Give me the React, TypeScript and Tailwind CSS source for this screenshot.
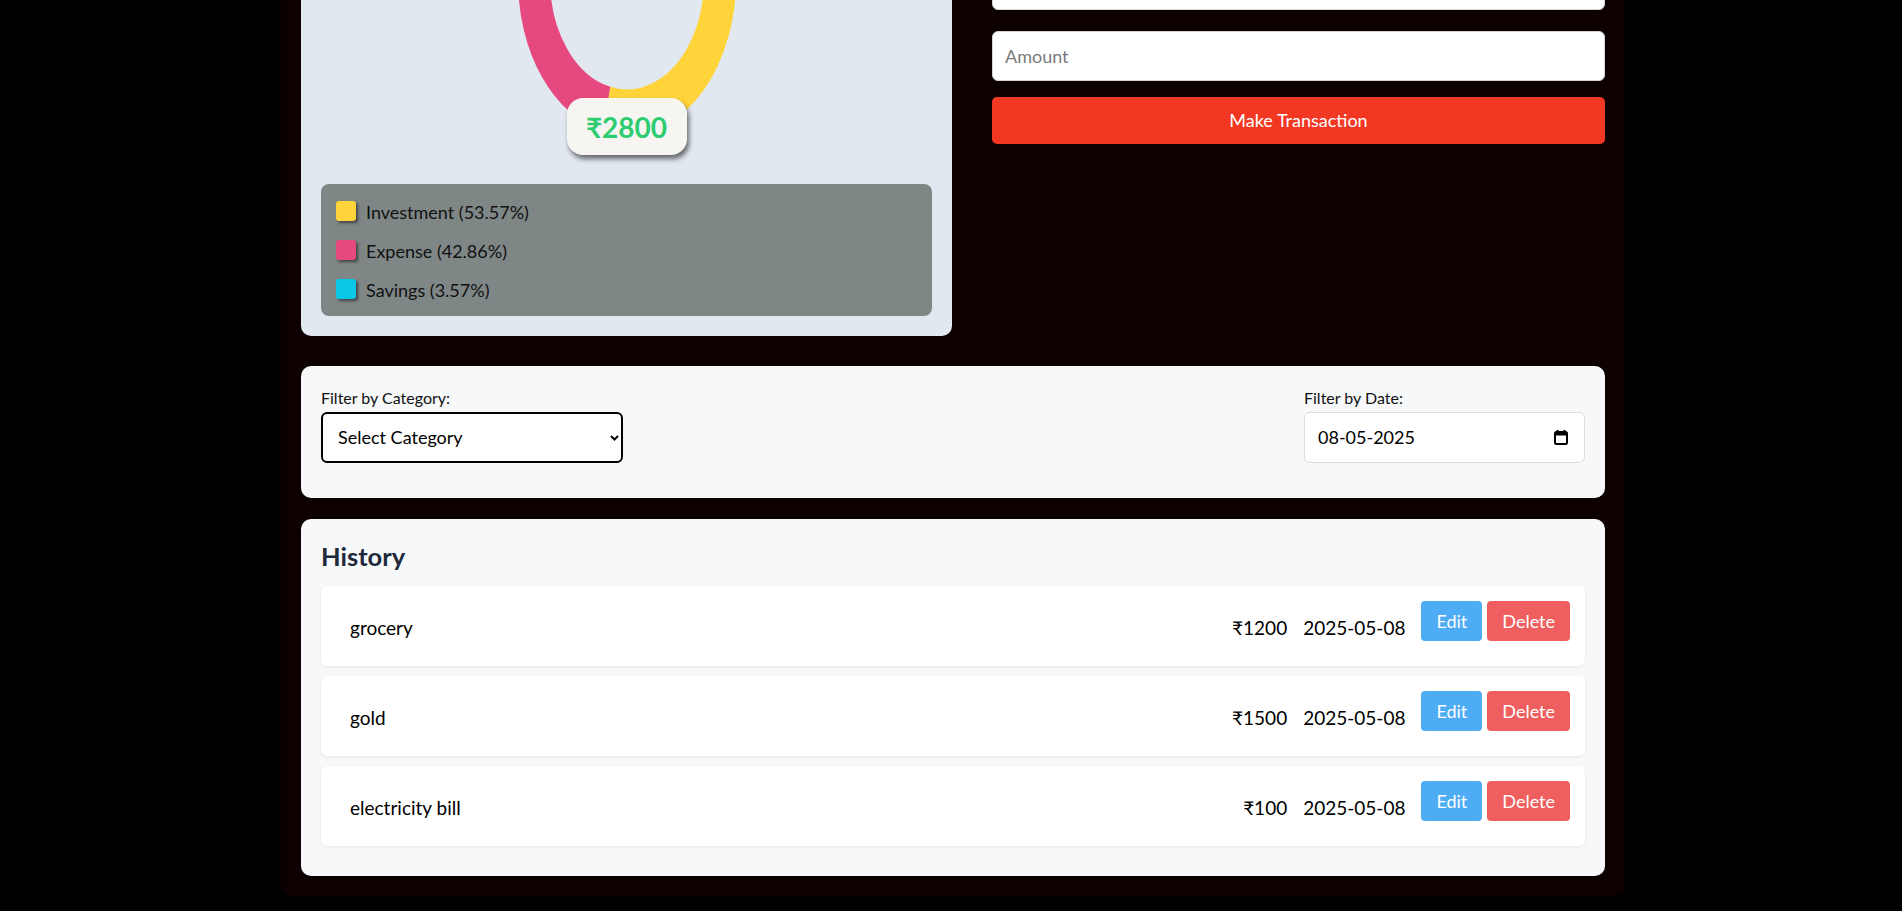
import React from "react";

const legend = [
  { label: "Investment", pct: "53.57", color: "bg-[#ffd43b]" },
  { label: "Expense", pct: "42.86", color: "bg-[#e64980]" },
  { label: "Savings", pct: "3.57", color: "bg-[#0bc8e8]" },
];

const segments = [
  { value: 53.57, color: "#ffd43b" },
  { value: 42.86, color: "#e64980" },
  { value: 3.57, color: "#0bc8e8" },
];

const history = [
  { name: "grocery", amount: 1200, date: "2025-05-08" },
  { name: "gold", amount: 1500, date: "2025-05-08" },
  { name: "electricity bill", amount: 100, date: "2025-05-08" },
];

// stretched doughnut, like a canvas chart squeezed by its box
function Donut() {
  let acc = 0;
  return (
    <svg
      viewBox="-100 -100 200 200"
      preserveAspectRatio="none"
      className="mx-auto block h-[310px] w-[218px]"
    >
      <g transform="rotate(-90)">
        {segments.map((s) => {
          const el = (
            <circle
              key={s.color}
              r="85.3"
              fill="none"
              stroke={s.color}
              strokeWidth="29.4"
              pathLength={100}
              strokeDasharray={`${s.value} ${100 - s.value}`}
              strokeDashoffset={-acc}
            />
          );
          acc += s.value;
          return el;
        })}
      </g>
    </svg>
  );
}

function ChartCard() {
  return (
    <section className="w-[651px] shrink-0 rounded-[10px] bg-[#e2e8f0] p-5">
      <div className="relative h-[330px]">
        <Donut />
        <div className="absolute bottom-0 left-1/2 flex h-[57px] w-[120px] -translate-x-1/2 items-center justify-center rounded-[16px] bg-[#f6f5f2] text-[28px] font-bold text-[#2ecc71] shadow-[2px_4px_5px_rgba(0,0,0,0.55)]">
          ₹2800
        </div>
      </div>
      {/* legend */}
      <div className="mt-[29px] flex flex-col gap-[19px] rounded-[8px] bg-[#7f8686] px-[15px] py-[17px]">
        {legend.map((l) => (
          <div key={l.label} className="flex h-5 items-center gap-[10px]">
            <span
              className={`h-5 w-5 rounded-[3px] shadow-[2px_2px_3px_rgba(0,0,0,0.5)] ${l.color}`}
            ></span>
            <span className="mt-[2px] text-[18px] leading-5 text-[#111]">
              {l.label} ({l.pct}%)
            </span>
          </div>
        ))}
      </div>
    </section>
  );
}

function TransactionForm() {
  const input =
    "mb-[21px] block h-[50px] w-full rounded-[6px] border border-[#d4d4d4] bg-white px-3 text-[18px] text-black outline-none placeholder:text-[#7a7a7a]";
  return (
    <section className="flex-1 pt-[13px]">
      <input className={input} placeholder="Description" />
      <input className={input} placeholder="Category" />
      <input className={input} placeholder="Date" />
      <input className={input} placeholder="Amount" />
      <button className="-mt-[5px] h-[47px] w-full rounded-[5px] bg-[#f23823] text-[18px] text-white">
        Make Transaction
      </button>
    </section>
  );
}

function CalendarIcon() {
  return (
    <svg width="14" height="15" viewBox="0 0 14 15">
      <path d="M3.5 0v3M10.5 0v3" stroke="#000" strokeWidth="2" />
      <rect
        x="1"
        y="2"
        width="12"
        height="12"
        rx="1.5"
        fill="none"
        stroke="#000"
        strokeWidth="2"
      />
      <rect x="1" y="2" width="12" height="3.5" fill="#000" />
    </svg>
  );
}

function Filters() {
  return (
    <section className="mt-[30px] flex justify-between rounded-[10px] bg-[#f7f8fa] px-5 pb-[35px] pt-[22px]">
      <div>
        <label className="mb-1 block text-[16px] leading-5 text-[#111]">
          Filter by Category:
        </label>
        <div className="flex h-[51px] w-[302px] items-center justify-between rounded-[6px] border-2 border-black bg-white pl-[15px] pr-[2px]">
          <span className="text-[18px] text-black">Select Category</span>
          <svg width="9" height="6" viewBox="0 0 9 6">
            <path d="M1 1l3.5 3.5L8 1" fill="none" stroke="#000" strokeWidth="2" />
          </svg>
        </div>
      </div>
      <div className="w-[281px]">
        <label className="mb-1 block text-[16px] leading-5 text-[#111]">
          Filter by Date:
        </label>
        <div className="flex h-[51px] items-center justify-between rounded-[6px] border border-[#dcdcdc] bg-white pl-[13px] pr-[16px]">
          <span className="text-[18px] text-black">08-05-2025</span>
          <CalendarIcon />
        </div>
      </div>
    </section>
  );
}

function History() {
  return (
    <section className="mt-[21px] rounded-[10px] bg-[#f7f8fa] p-5">
      <h2 className="mb-[14px] pt-[1px] text-[25.5px] font-bold leading-8 text-[#1e293b]">
        History
      </h2>
      {history.map((h) => (
        <div
          key={h.name}
          className="mb-[10px] flex h-[80px] items-center justify-between rounded-[6px] bg-white pl-[29px] pr-[15px] shadow-[0_1px_3px_rgba(0,0,0,0.08)]"
        >
          <span className="mt-1 text-[19px] text-black">{h.name}</span>
          <div className="flex items-center gap-4">
            <span className="mt-1 text-[19px] text-black">₹{h.amount}</span>
            <span className="mt-1 text-[19px] text-black">{h.date}</span>
            <div className="mb-[10px] flex gap-[5px]">
              <button className="h-10 rounded-[4px] bg-[#4eacf5] px-[15px] text-[18px] text-white">
                Edit
              </button>
              <button className="h-10 rounded-[4px] bg-[#f05f5f] px-[15px] text-[18px] text-white">
                Delete
              </button>
            </div>
          </div>
        </div>
      ))}
    </section>
  );
}

export default function App() {
  return (
    <div className="min-h-screen overflow-hidden bg-black font-['Lato','Noto_Sans',sans-serif]">
      <div className="-mt-[215px] ml-[281px] w-[1344px] rounded-b-[10px] bg-[#0d0000] p-5">
        <div className="flex items-start gap-10">
          <ChartCard />
          <TransactionForm />
        </div>
        <Filters />
        <History />
      </div>
    </div>
  );
}
